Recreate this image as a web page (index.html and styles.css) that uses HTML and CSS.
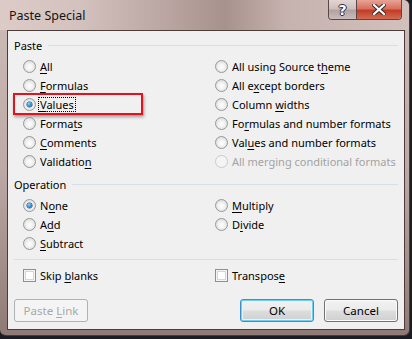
FILE: index.html
```html
<!DOCTYPE html>
<html lang="en">
<head>
    <meta charset="UTF-8">
    <title>Paste Special</title>
    <link rel="stylesheet" href="styles.css">
</head>
<body>

    <div class="janela">
        <!-- Barra de título -->
        <div class="titulo">
            <span class="titulo-texto">Paste Special</span>
            <div class="botoes-titulo">
                <span class="btn-ajuda">?</span>
                <span class="btn-fechar">
                    <svg width="14" height="11" viewBox="0 0 14 11"><path d="M2 1 L12 10 M12 1 L2 10" stroke="#3b2a28" stroke-width="4.2" stroke-linecap="square"/><path d="M2 1 L12 10 M12 1 L2 10" stroke="#fff" stroke-width="2.2" stroke-linecap="square"/></svg>
                </span>
            </div>
        </div>

        <div class="cliente">
            <!-- Grupo Paste -->
            <div class="grupo">Paste</div>
            <div class="opcoes">
                <label class="opcao"><span class="radio"></span><span><u>A</u>ll</span></label>
                <label class="opcao"><span class="radio"></span><span>All using Source t<u>h</u>eme</span></label>
                <label class="opcao"><span class="radio"></span><span><u>F</u>ormulas</span></label>
                <label class="opcao"><span class="radio"></span><span>All e<u>x</u>cept borders</span></label>
                <label class="opcao destaque"><span class="radio marcado"></span><span class="foco"><u>V</u>alues</span><span class="caixa-vermelha"></span></label>
                <label class="opcao"><span class="radio"></span><span>Column <u>w</u>idths</span></label>
                <label class="opcao"><span class="radio"></span><span>Forma<u>t</u>s</span></label>
                <label class="opcao"><span class="radio"></span><span>Fo<u>r</u>mulas and number formats</span></label>
                <label class="opcao"><span class="radio"></span><span><u>C</u>omments</span></label>
                <label class="opcao"><span class="radio"></span><span>Val<u>u</u>es and number formats</span></label>
                <label class="opcao"><span class="radio"></span><span>Validatio<u>n</u></span></label>
                <label class="opcao desativado"><span class="radio"></span><span>All merging conditional formats</span></label>
            </div>

            <!-- Grupo Operation -->
            <div class="grupo grupo-op">Operation</div>
            <div class="opcoes opcoes-op">
                <label class="opcao"><span class="radio marcado"></span><span>N<u>o</u>ne</span></label>
                <label class="opcao"><span class="radio"></span><span><u>M</u>ultiply</span></label>
                <label class="opcao"><span class="radio"></span><span>A<u>d</u>d</span></label>
                <label class="opcao"><span class="radio"></span><span>D<u>i</u>vide</span></label>
                <label class="opcao"><span class="radio"></span><span><u>S</u>ubtract</span></label>
            </div>

            <div class="separador"></div>

            <div class="opcoes opcoes-check">
                <label class="opcao"><span class="check"></span><span>Skip <u>b</u>lanks</span></label>
                <label class="opcao"><span class="check"></span><span>Transpos<u>e</u></span></label>
            </div>

            <!-- Botões -->
            <div class="rodape">
                <button type="button" class="botao" disabled>Paste <u>L</u>ink</button>
                <span class="espaco"></span>
                <button type="button" class="botao padrao">OK</button>
                <button type="button" class="botao">Cancel</button>
            </div>
        </div>
    </div>

</body>
</html>
```

FILE: styles.css
```css
* { margin: 0; padding: 0; box-sizing: border-box; }
body { background: #1c1c24; width: 412px; height: 339px; overflow: hidden; font-family: "Noto Sans", "Open Sans", sans-serif; font-size: 11px; color: #000; }

.janela { width: 410px; height: 336px; background: linear-gradient(180deg, #cdbcb8 0%, #bda9a5 50%, #8f7a76 100%); border-radius: 0 6px 6px 6px; border-right: 1px solid #4a3a38; border-bottom: 1px solid #4a3a38; }

.titulo { height: 30px; display: flex; justify-content: space-between; align-items: flex-start; background: linear-gradient(90deg, #dccbc7 0%, #d3c1bd 20%, #b49f9b 45%, #a8928e 55%, #c6b2ae 70%, #d2c0bc 100%); border-radius: 0 6px 0 0; }
.titulo-texto { padding: 7px 0 0 9px; font-size: 12.5px; color: #141414; }
.botoes-titulo { display: flex; margin-right: 7px; border: 1px solid #5a4644; border-top: none; border-radius: 0 0 4px 4px; overflow: hidden; }
.btn-ajuda { width: 28px; height: 19px; display: flex; justify-content: center; align-items: center; background: linear-gradient(180deg, #e2d6d4 0%, #cdbfbd 45%, #b3a19e 55%, #c9bcba 100%); color: #fff; font-weight: bold; font-size: 14px; font-family: "DejaVu Sans", sans-serif; text-shadow: 0 0 1px #3b2a28, 1px 0 0 #3b2a28, -1px 0 0 #3b2a28, 0 1px 0 #3b2a28, 0 -1px 0 #3b2a28; border-right: 1px solid #5a4644; }
.btn-fechar { width: 44px; height: 19px; display: flex; justify-content: center; align-items: center; background: linear-gradient(180deg, #e8a496 0%, #d8705e 45%, #c23c26 55%, #d46a52 100%); }

.cliente { margin: 0 0 0 7px; width: 398px; height: 300px; background: #f0f0f0; border: 1px solid #4b3b39; padding: 6px 6px 0 6px; }

.grupo { height: 16px; display: flex; align-items: center; }
.grupo::after { content: ""; flex: 1; height: 1px; background: #d5dfe5; margin-left: 6px; }
.grupo-op { margin-top: 5px; }

.opcoes { display: grid; grid-template-columns: 192px 1fr; padding-left: 9px; margin-top: 4px; }
.opcao { height: 19px; display: flex; align-items: center; gap: 4px; white-space: nowrap; }
.opcao u { text-decoration-thickness: 1px; text-underline-offset: 2px; }

.radio { width: 13px; height: 13px; border-radius: 50%; border: 1px solid #979898; background: radial-gradient(circle at 50% 55%, #fff 0%, #f4f4f4 35%, #d0d0d0 100%); position: relative; flex: none; }
.radio.marcado::after { content: ""; position: absolute; left: 3px; top: 3px; width: 5px; height: 5px; border-radius: 50%; background: radial-gradient(circle at 40% 35%, #9fe0ff 0%, #3da0e0 35%, #174f8a 100%); box-shadow: 0 0 0 0.5px #1f4a78; }
.check { width: 13px; height: 13px; border: 1px solid #8e8f8f; background: #fff; box-shadow: inset 0 0 0 1px #f4f4f4, inset 0 0 0 2px #d6d6d6; flex: none; }

.desativado { color: #a3a3a3; }
.desativado .radio { border-color: #cacaca; background: #f4f4f4; }

.destaque { position: relative; }
.foco { outline: 1px dotted #000; outline-offset: 0; padding: 0 1px; margin-left: -1px; line-height: 13px; }
.caixa-vermelha { position: absolute; left: -10px; top: -2px; width: 130px; height: 22px; border: 2.5px solid #e8101a; box-shadow: 1px 2px 3px rgba(0, 0, 0, 0.35); }

.opcoes-op { margin-top: 4px; }
.separador { height: 1px; background: #d5dfe5; margin-top: 6px; }
.opcoes-check { margin-top: 6px; }

.rodape { display: flex; gap: 10px; margin-top: 14px; }
.espaco { flex: 1; }
.botao { width: 74px; height: 23px; font-family: inherit; font-size: 11.5px; color: #000; border: 1px solid #707070; border-radius: 3px; background: linear-gradient(180deg, #f2f2f2 0%, #ebebeb 48%, #dddddd 52%, #cfcfcf 100%); box-shadow: inset 0 0 0 1px #fcfcfc; }
.botao u { text-underline-offset: 2px; }
.botao:disabled { color: #a8a8a8; background: #f4f4f4; border-color: #adb2b5; box-shadow: none; }
.botao.padrao { border-color: #3c8fc8; box-shadow: inset 0 0 0 1px #6fd0f5, inset 0 0 0 2px #e4f4fb; background: linear-gradient(180deg, #f2f2f2 0%, #ebebeb 48%, #dddddd 52%, #cfcfcf 100%); }
```
